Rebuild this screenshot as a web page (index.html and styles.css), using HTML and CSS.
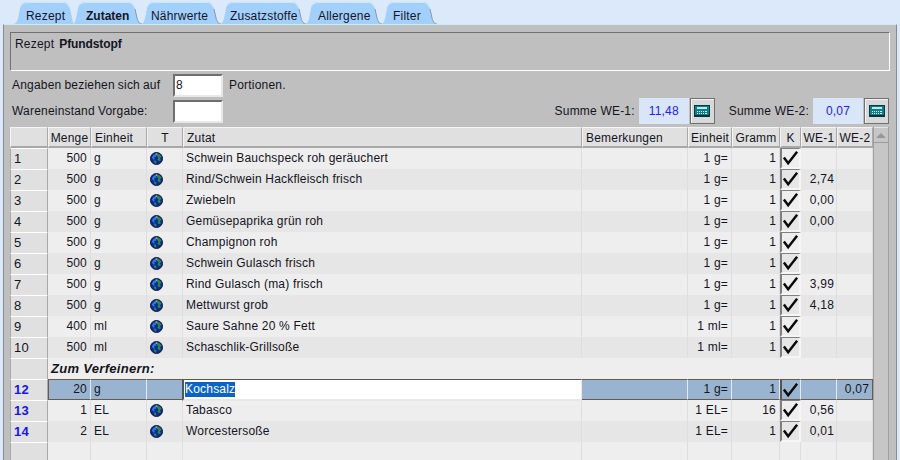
FILE: index.html
```html
<!DOCTYPE html>
<html lang="de">
<head>
<meta charset="utf-8">
<title>Zutaten</title>
<link rel="stylesheet" href="styles.css">
</head>
<body>
<svg class="defs" width="0" height="0" aria-hidden="true">
  <symbol id="globe" viewBox="0 0 14 14">
    <circle cx="7" cy="7" r="6.5" fill="#0a2a9c" stroke="#101030" stroke-width="1"/>
    <path d="M2 6 4 3 7 2.5 6.5 5 4.5 5.5 5 8 3.5 8Z" fill="#2a7fd8"/>
    <path d="M7 1.5C9.5 1.5 11.5 3 12.5 5L10.5 7 12 9 9.500 10 8 8 9 6 7.5 4Z" fill="#2f8a3c"/>
    <path d="M4 9 6.5 9.5 7 12.5 5 12Z" fill="#2f8a3c"/>
    <path d="M6 1.6 8 1.6 7.5 3 6 3Z" fill="#b8c8c0"/>
  </symbol>
  <symbol id="check" viewBox="0 0 18 19">
    <path d="M2 9 6.500 15 16 3" fill="none" stroke="#0a0a0a" stroke-width="2.600"/>
  </symbol>
  <symbol id="calc" viewBox="0 0 16 12">
    <rect x="0.500" y="0.500" width="15" height="11" fill="#0a7f8c" stroke="#063a44"/>
    <rect x="3" y="2" width="10" height="2" fill="#bfeaf0"/>
    <path d="M3 6h1v1H3zM5 6h1v1H5zM7 6h1v1H7zM9 6h1v1H9zM11 6h2v1h-2zM3 8h1v1H3zM5 8h1v1H5zM7 8h1v1H7zM9 8h1v1H9zM11 8h2v1h-2z" fill="#e6fafa"/>
    <rect x="1" y="10" width="14" height="1.500" fill="#052c34"/>
  </symbol>
</svg>

<nav class="tabs">
  <div class="tab w-rezept">
    <svg class="tab-shape" viewBox="0 0 61 24" preserveAspectRatio="none"><path class="tab-fill" d="M0 24C4 24 5 19 6 14L7 8C8 4 11 2 15 2H50C54 2 56 5 57 9L59 18C60 22 60 24 61 24Z"/><path class="tab-top" d="M7 7C8 4 11 2.500 15 2.500H50C53 2.500 55 4 56 7"/></svg>
    <span class="tab-label">Rezept</span>
  </div>
  <div class="tab tab-active w-zutaten">
    <svg class="tab-shape" viewBox="0 0 71 24" preserveAspectRatio="none"><path class="tab-fill" d="M0 24C3 24 4 19 5 14L6 8C7 4 10 2 14 2H56C60 2 62 5 63 9L65 18C66 22 68 24 71 24Z"/><path class="tab-top" d="M6 7C7 4 10 2.500 14 2.500H56C59 2.500 61 4 62 7"/><path class="tab-edge" d="M63 9 65 18C66 22 68 24 70 24"/></svg>
    <span class="tab-label">Zutaten</span>
  </div>
  <div class="tab w-naehr">
    <svg class="tab-shape" viewBox="0 0 81 24" preserveAspectRatio="none"><path class="tab-fill" d="M0 24C3 24 4 19 5 14L6 8C7 4 10 2 14 2H66C70 2 72 5 73 9L75 18C76 22 78 24 81 24Z"/><path class="tab-top" d="M6 7C7 4 10 2.500 14 2.500H66C69 2.500 71 4 72 7"/><path class="tab-edge" d="M73 9 75 18C76 22 78 24 80 24"/></svg>
    <span class="tab-label">Nährwerte</span>
  </div>
  <div class="tab w-zusatz">
    <svg class="tab-shape" viewBox="0 0 87 24" preserveAspectRatio="none"><path class="tab-fill" d="M0 24C3 24 4 19 5 14L6 8C7 4 10 2 14 2H72C76 2 78 5 79 9L81 18C82 22 84 24 87 24Z"/><path class="tab-top" d="M6 7C7 4 10 2.500 14 2.500H72C75 2.500 77 4 78 7"/><path class="tab-edge" d="M79 9 81 18C82 22 84 24 86 24"/></svg>
    <span class="tab-label">Zusatzstoffe</span>
  </div>
  <div class="tab w-allergene">
    <svg class="tab-shape" viewBox="0 0 78 24" preserveAspectRatio="none"><path class="tab-fill" d="M0 24C3 24 4 19 5 14L6 8C7 4 10 2 14 2H63C67 2 69 5 70 9L72 18C73 22 75 24 78 24Z"/><path class="tab-top" d="M6 7C7 4 10 2.500 14 2.500H63C66 2.500 68 4 69 7"/><path class="tab-edge" d="M70 9 72 18C73 22 75 24 77 24"/></svg>
    <span class="tab-label">Allergene</span>
  </div>
  <div class="tab w-filter">
    <svg class="tab-shape" viewBox="0 0 57 24" preserveAspectRatio="none"><path class="tab-fill" d="M0 24C3 24 4 19 5 14L6 8C7 4 10 2 14 2H42C46 2 48 5 49 9L51 18C52 22 54 24 57 24Z"/><path class="tab-top" d="M6 7C7 4 10 2.500 14 2.500H42C45 2.500 47 4 48 7"/><path class="tab-edge" d="M49 9 51 18C52 22 54 24 56 24"/></svg>
    <span class="tab-label">Filter</span>
  </div>
</nav>

<main class="panel">
  <section class="recipe-box">Rezept&nbsp; <strong>Pfundstopf</strong></section>

  <div class="form-row row-portions">
    <span class="form-label">Angaben beziehen sich auf</span>
    <input class="field" type="text" value="8">
    <span class="after-field">Portionen.</span>
  </div>

  <div class="form-row row-summe">
    <span class="form-label">Wareneinstand Vorgabe:</span>
    <input class="field" type="text" value="">
    <div class="summen">
      <span>Summe WE-1:</span>
      <output class="sum-value">11,48</output>
      <button class="calc-btn" type="button" aria-label="Berechnen"><svg class="calc-icon"><use href="#calc"/></svg></button>
      <span class="sum2-label">Summe WE-2:</span>
      <output class="sum-value">0,07</output>
      <button class="calc-btn" type="button" aria-label="Berechnen"><svg class="calc-icon"><use href="#calc"/></svg></button>
    </div>
  </div>

  <div class="grid-wrap">
    <table class="grid">
      <colgroup>
        <col class="c-head"><col class="c-menge"><col class="c-einheit"><col class="c-t"><col class="c-zutat"><col class="c-bem"><col class="c-einh2"><col class="c-gramm"><col class="c-k"><col class="c-we"><col class="c-we">
      </colgroup>
      <thead>
        <tr>
          <th></th><th>Menge</th><th class="left">Einheit</th><th>T</th><th class="left">Zutat</th><th class="left">Bemerkungen</th><th>Einheit</th><th>Gramm</th><th>K</th><th>WE-1</th><th>WE-2</th>
        </tr>
      </thead>
      <tbody>
        <tr class="odd"><th class="rh">1</th><td class="num">500</td><td>g</td><td class="ic"><svg class="globe"><use href="#globe"/></svg></td><td>Schwein Bauchspeck roh geräuchert</td><td></td><td class="num">1 g=</td><td class="num">1</td><td class="chk"><svg class="check"><use href="#check"/></svg></td><td class="num"></td><td class="num"></td></tr>
        <tr class="even"><th class="rh">2</th><td class="num">500</td><td>g</td><td class="ic"><svg class="globe"><use href="#globe"/></svg></td><td>Rind/Schwein Hackfleisch frisch</td><td></td><td class="num">1 g=</td><td class="num">1</td><td class="chk"><svg class="check"><use href="#check"/></svg></td><td class="num we">2,74</td><td class="num"></td></tr>
        <tr class="odd"><th class="rh">3</th><td class="num">500</td><td>g</td><td class="ic"><svg class="globe"><use href="#globe"/></svg></td><td>Zwiebeln</td><td></td><td class="num">1 g=</td><td class="num">1</td><td class="chk"><svg class="check"><use href="#check"/></svg></td><td class="num we">0,00</td><td class="num"></td></tr>
        <tr class="even"><th class="rh">4</th><td class="num">500</td><td>g</td><td class="ic"><svg class="globe"><use href="#globe"/></svg></td><td>Gemüsepaprika grün roh</td><td></td><td class="num">1 g=</td><td class="num">1</td><td class="chk"><svg class="check"><use href="#check"/></svg></td><td class="num we">0,00</td><td class="num"></td></tr>
        <tr class="odd"><th class="rh">5</th><td class="num">500</td><td>g</td><td class="ic"><svg class="globe"><use href="#globe"/></svg></td><td>Champignon roh</td><td></td><td class="num">1 g=</td><td class="num">1</td><td class="chk"><svg class="check"><use href="#check"/></svg></td><td class="num"></td><td class="num"></td></tr>
        <tr class="even"><th class="rh">6</th><td class="num">500</td><td>g</td><td class="ic"><svg class="globe"><use href="#globe"/></svg></td><td>Schwein Gulasch frisch</td><td></td><td class="num">1 g=</td><td class="num">1</td><td class="chk"><svg class="check"><use href="#check"/></svg></td><td class="num"></td><td class="num"></td></tr>
        <tr class="odd"><th class="rh">7</th><td class="num">500</td><td>g</td><td class="ic"><svg class="globe"><use href="#globe"/></svg></td><td>Rind Gulasch (ma) frisch</td><td></td><td class="num">1 g=</td><td class="num">1</td><td class="chk"><svg class="check"><use href="#check"/></svg></td><td class="num we">3,99</td><td class="num"></td></tr>
        <tr class="even"><th class="rh">8</th><td class="num">500</td><td>g</td><td class="ic"><svg class="globe"><use href="#globe"/></svg></td><td>Mettwurst grob</td><td></td><td class="num">1 g=</td><td class="num">1</td><td class="chk"><svg class="check"><use href="#check"/></svg></td><td class="num we">4,18</td><td class="num"></td></tr>
        <tr class="odd"><th class="rh">9</th><td class="num">400</td><td>ml</td><td class="ic"><svg class="globe"><use href="#globe"/></svg></td><td>Saure Sahne 20 % Fett</td><td></td><td class="num">1 ml=</td><td class="num">1</td><td class="chk"><svg class="check"><use href="#check"/></svg></td><td class="num"></td><td class="num"></td></tr>
        <tr class="even"><th class="rh">10</th><td class="num">500</td><td>ml</td><td class="ic"><svg class="globe"><use href="#globe"/></svg></td><td>Schaschlik-Grillsoße</td><td></td><td class="num">1 ml=</td><td class="num">1</td><td class="chk"><svg class="check"><use href="#check"/></svg></td><td class="num"></td><td class="num"></td></tr>
        <tr class="section"><th class="rh"></th><td colspan="10" class="section-title">Zum Verfeinern:</td></tr>
        <tr class="selected"><th class="rh rh-blue">12</th><td class="num">20</td><td>g</td><td class="ic"></td><td class="edit-cell"><div class="editor"><span class="selection">Kochsalz</span></div></td><td></td><td class="num">1 g=</td><td class="num">1</td><td class="chk"><svg class="check"><use href="#check"/></svg></td><td class="num"></td><td class="num we2">0,07</td></tr>
        <tr class="odd"><th class="rh rh-blue">13</th><td class="num">1</td><td>EL</td><td class="ic"><svg class="globe"><use href="#globe"/></svg></td><td>Tabasco</td><td></td><td class="num">1 EL=</td><td class="num">16</td><td class="chk"><svg class="check"><use href="#check"/></svg></td><td class="num we">0,56</td><td class="num"></td></tr>
        <tr class="even"><th class="rh rh-blue">14</th><td class="num">2</td><td>EL</td><td class="ic"><svg class="globe"><use href="#globe"/></svg></td><td>Worcestersoße</td><td></td><td class="num">1 EL=</td><td class="num">1</td><td class="chk"><svg class="check"><use href="#check"/></svg></td><td class="num we">0,01</td><td class="num"></td></tr>
        <tr class="odd"><th class="rh"></th><td></td><td></td><td></td><td></td><td></td><td></td><td></td><td></td><td></td><td></td></tr>
      </tbody>
    </table>
    <div class="scrollbar">
      <div class="scroll-up"><span class="arrow"></span></div>
    </div>
  </div>
</main>
</body>
</html>
```
FILE: styles.css
```css
* { box-sizing: border-box; }
html, body { margin: 0; height: 460px; overflow: hidden; }
body {
  background: #dce9fa;
  color: #14141e;
  font: 12px/1 "Liberation Sans", Arial, sans-serif;
  letter-spacing: 0.2px;
}
.defs { display: block; height: 0; }

/* tabs */
.tabs { display: flex; height: 24px; padding-left: 13px; }
.tab { position: relative; height: 24px; margin-right: -2px; }
.tab-shape { position: absolute; inset: 0; width: 100%; height: 100%; display: block; }
.tab-fill { fill: #a3cffc; }
.tab-top { fill: none; stroke: #c4ecf2; stroke-width: 1; }
.tab-edge { fill: none; stroke: #7f9bb0; stroke-width: 1; }
.tab-label { position: absolute; top: 10px; }
.tab-active { z-index: 2; font-weight: bold; letter-spacing: 0; }
.w-rezept { width: 61px; }
.w-rezept .tab-label { left: 13px; }
.w-zutaten { width: 71px; }
.w-zutaten .tab-label { left: 14px; }
.w-naehr { width: 81px; }
.w-naehr .tab-label { left: 10px; }
.w-zusatz { width: 87px; }
.w-zusatz .tab-label { left: 10px; }
.w-allergene { width: 78px; }
.w-allergene .tab-label { left: 13px; }
.w-filter { width: 57px; }
.w-filter .tab-label { left: 12px; }

/* panel */
.panel {
  height: 436px;
  margin: 0 3px;
  padding: 7px 6px 0;
  background: #bfbfbf;
  border-top: 1px solid #c6eef2;
  border-left: 1px solid #8a8a8a;
  border-right: 1px solid #8a8a8a;
  display: flex;
  flex-direction: column;
  overflow: hidden;
}
.recipe-box {
  height: 39px;
  padding: 5px 4px;
  background: #bfbfbf;
  border: 1px solid;
  border-color: #707070 #fff #fff #707070;
  flex: none;
}
.recipe-box strong { letter-spacing: -0.1px; margin-left: -2px; }
.form-row { display: flex; align-items: center; flex: none; }
.row-portions { height: 24px; margin-top: 2px; padding-left: 2px; }
.row-summe { height: 28px; padding: 0 1px 0 2px; }
.form-label { width: 161px; word-spacing: -0.5px; }
.field {
  width: 50px;
  height: 23px;
  padding: 0 1px;
  border: 2px solid;
  border-color: #6e6e6e #e8e8e8 #e8e8e8 #6e6e6e;
  background: #fff;
  font: inherit;
  letter-spacing: inherit;
  color: #14141e;
  outline: none;
}
.after-field { margin-left: 6px; }
.summen { margin-left: auto; display: flex; align-items: center; }
.sum-value {
  width: 50px;
  height: 26px;
  margin-left: 4px;
  background: #d8e6f8;
  color: #2020ff;
  display: flex;
  align-items: center;
  justify-content: center;
}
.sum2-label { margin-left: 14px; }
.calc-btn {
  width: 25px;
  height: 26px;
  margin-left: 1px;
  padding: 0;
  background: #d8d8d8;
  border: 1px solid #707070;
  box-shadow: inset 1px 1px 0 #f4f4f4;
  display: flex;
  align-items: center;
  justify-content: center;
}
.calc-icon { width: 16px; height: 12px; display: block; }

/* grid */
.grid-wrap { display: flex; flex: 1; min-height: 0; margin-top: 2px; overflow: hidden; }
.grid {
  width: 863px;
  flex: none;
  table-layout: fixed;
  border-collapse: separate;
  border-spacing: 0;
  align-self: flex-start;
}
.c-head { width: 38px; }
.c-menge { width: 43px; }
.c-einheit { width: 56px; }
.c-t { width: 36px; }
.c-zutat { width: 399px; }
.c-bem { width: 106px; }
.c-einh2 { width: 44px; }
.c-gramm { width: 48px; }
.c-k { width: 21px; }
.c-we { width: 36px; }

.grid th, .grid td {
  height: 21px;
  padding: 0 3px 1px;
  font-weight: normal;
  white-space: nowrap;
  overflow: hidden;
}
.grid td { border-right: 1px solid #dedede; }
.grid thead th {
  background: #e0e0e0;
  border-top: 1px solid #f4f4f4;
  border-left: 1px solid #f4f4f4;
  border-right: 1px solid #a8a8a8;
  border-bottom: 2px solid #a8a8a8;
  text-align: center;
  padding: 1px 1px 0;
}
.grid thead th.left { text-align: left; padding-left: 3px; }
.grid .rh {
  background: #e0e0e0;
  border-top: 1px solid #fff;
  border-right: 1px solid #a8a8a8;
  border-left: 1px solid #a8a8a8;
  text-align: left;
  padding-left: 3px;
  font-size: 13px;
}
.grid .rh-blue { color: #1414f0; font-weight: bold; letter-spacing: 0.2px; }
.odd td { background: #eee; }
.even td { background: #e6e6e6; }
.section td { background: #eee; }
.grid .section-title { font-weight: bold; font-style: italic; font-size: 13px; letter-spacing: 0.3px; }
.num { text-align: right; }
.grid .we { padding-right: 2px; }
.grid .ic { padding: 0; }
.globe { width: 13px; height: 13px; display: block; margin-left: 3px; }
.grid .chk {
  padding: 0;
  border-top: 1px solid #808080;
  border-left: 2px solid #808080;
  border-right: 2px solid #f6f6f6;
  border-bottom: 2px solid #f6f6f6;
}
.check { width: 17px; height: 18px; display: block; }

.selected td {
  background: #99b4d1;
  border-top: 1px solid #6b5a48;
  border-bottom: 1px solid #6b5a48;
  border-right: 1px solid #e4e8f0;
}
.grid .selected td.chk { border-top: 1px solid #6b5a48; border-bottom: 1px solid #6b5a48; border-left: 2px solid #555; border-right: 1px solid #e4e8f0; }
.selected td:last-child { border-right: 1px solid #6b5a48; }
.selected td:nth-child(2) { border-left: 1px solid #6b5a48; }
.grid .edit-cell { padding: 0; overflow: visible; position: relative; }
.editor {
  position: absolute;
  left: -1px;
  right: -1px;
  top: -1px;
  height: 22px;
  padding: 2px 1px;
  background: #fff;
  border-top: 1px solid #555;
  border-left: 2px solid #555;
  border-bottom: 2px solid #e8e8e8;
  border-right: 1px solid #e8e8e8;
}
.selection { display: inline-block; padding: 1px 0 2px; background: #0a64c8; color: #fff; }

/* scrollbar */
.scrollbar {
  width: 16px;
  flex: none;
  background: #c6c6c6;
  border-left: 1px solid #a0a0a0;
  border-right: 1px solid #a0a0a0;
}
.scroll-up {
  height: 16px;
  background: #c6c6c6;
  border-top: 1px solid #e4e4e4;
  border-bottom: 1px solid #9a9a9a;
  display: flex;
  align-items: center;
  justify-content: center;
}
.arrow {
  width: 0;
  height: 0;
  border-left: 5px solid transparent;
  border-right: 5px solid transparent;
  border-bottom: 5px solid #979797;
}
```
